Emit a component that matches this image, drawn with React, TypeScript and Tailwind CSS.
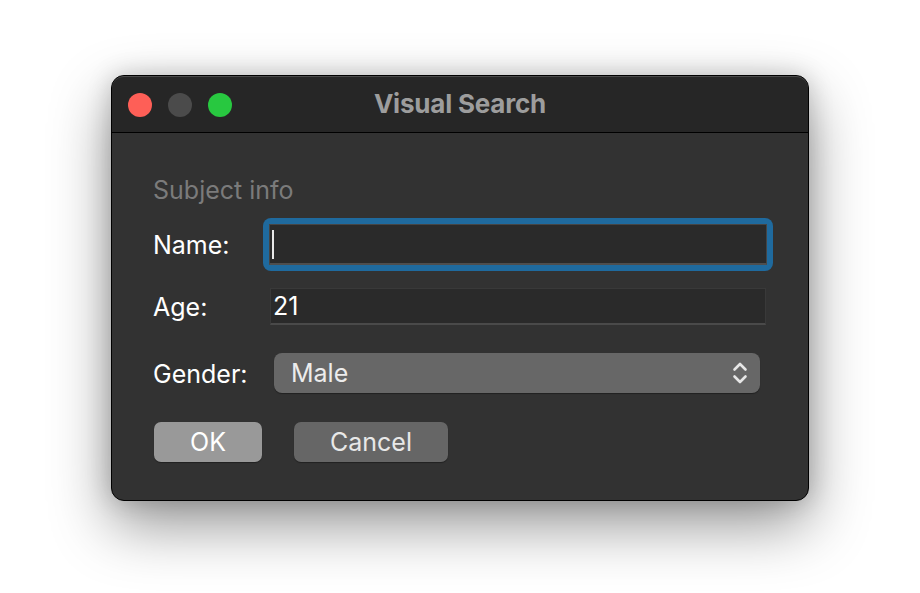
import React from "react";

function Chevrons() {
  return (
    <svg width="16" height="24" viewBox="0 0 16 24" fill="none" stroke="#e6e6e6" strokeWidth="2.6" strokeLinecap="round" strokeLinejoin="round">
      <path d="M2.5 8.5 L8 3 L13.5 8.5" />
      <path d="M2.5 15.5 L8 21 L13.5 15.5" />
    </svg>
  );
}

export default function App() {
  return (
    <div className="w-[920px] h-[593px] bg-white overflow-hidden" style={{ fontFamily: "Inter, 'Liberation Sans', sans-serif" }}>
      <div className="ml-[111px] mt-[75px] w-[698px] h-[426px] rounded-[13px] border border-black bg-[#323232] overflow-hidden shadow-[0_24px_60px_rgba(0,0,0,0.42),0_0_24px_rgba(0,0,0,0.18)] flex flex-col">
        <div className="h-[57px] shrink-0 bg-[#262626] border-b border-black grid grid-cols-[1fr_auto_1fr] items-center rounded-t-[12px] border-t border-t-[#4a4a4a]">
          <div className="flex items-center gap-[16px] pl-[16px]">
            <div className="w-[24px] h-[24px] rounded-full bg-[#fe5f57]" />
            <div className="w-[24px] h-[24px] rounded-full bg-[#4b4b4b]" />
            <div className="w-[24px] h-[24px] rounded-full bg-[#28c840]" />
          </div>
          <div className="text-[26px] font-bold text-[#9d9d9d] tracking-[-0.2px] pb-[2px]">Visual Search</div>
          <div />
        </div>
        <div className="flex-1 flex flex-col pl-[41px] pt-[41px]">
          <div className="text-[25px] leading-[30px] text-[#7b7b7b] pt-[1px]">Subject info</div>
          <div className="flex items-center mt-[13px] h-[53px]">
            <div className="w-[110px] text-[25px] text-white pt-[3px]">Name:</div>
            <div className="w-[510px] h-[53px] rounded-[8px] bg-[#1f6a9e] p-[6px]">
              <div className="h-full bg-[#2a2a2a] border border-[#454545] border-b-[2px] border-b-[#4e4e4e] flex items-center pl-[2px]">
                <div className="w-[2px] h-[29px] bg-[#e8e8e8]" />
              </div>
            </div>
          </div>
          <div className="flex items-center mt-[17px] h-[37px]">
            <div className="w-[117px] text-[25px] text-white pt-[3px]">Age:</div>
            <div className="w-[496px] h-[37px] bg-[#2a2a2a] border border-[#393939] border-b-[2px] border-b-[#4a4a4a] flex items-center pl-[2px] pt-[2px] text-[25px] text-white">21</div>
          </div>
          <div className="flex items-center mt-[28px] h-[40px]">
            <div className="w-[121px] text-[25px] text-white pt-[3px]">Gender:</div>
            <div className="w-[486px] h-[40px] rounded-[8px] bg-[#676767] flex items-center justify-between pl-[17px] pr-[12px] text-[25px] text-[#ececec] shadow-[0_1px_1px_rgba(0,0,0,0.35)]">
              <span className="pt-[2px]">Male</span>
              <Chevrons />
            </div>
          </div>
          <div className="flex items-center mt-[29px] gap-[32px] pl-[1px]">
            <div className="w-[108px] h-[40px] rounded-[7px] bg-[#999999] flex items-center justify-center text-[25px] text-white pt-[1px] shadow-[0_1px_1px_rgba(0,0,0,0.35)]">OK</div>
            <div className="w-[154px] h-[40px] rounded-[7px] bg-[#666666] flex items-center justify-center text-[25px] text-[#e8e8e8] pt-[1px] shadow-[0_1px_1px_rgba(0,0,0,0.35)]">Cancel</div>
          </div>
        </div>
      </div>
    </div>
  );
}
